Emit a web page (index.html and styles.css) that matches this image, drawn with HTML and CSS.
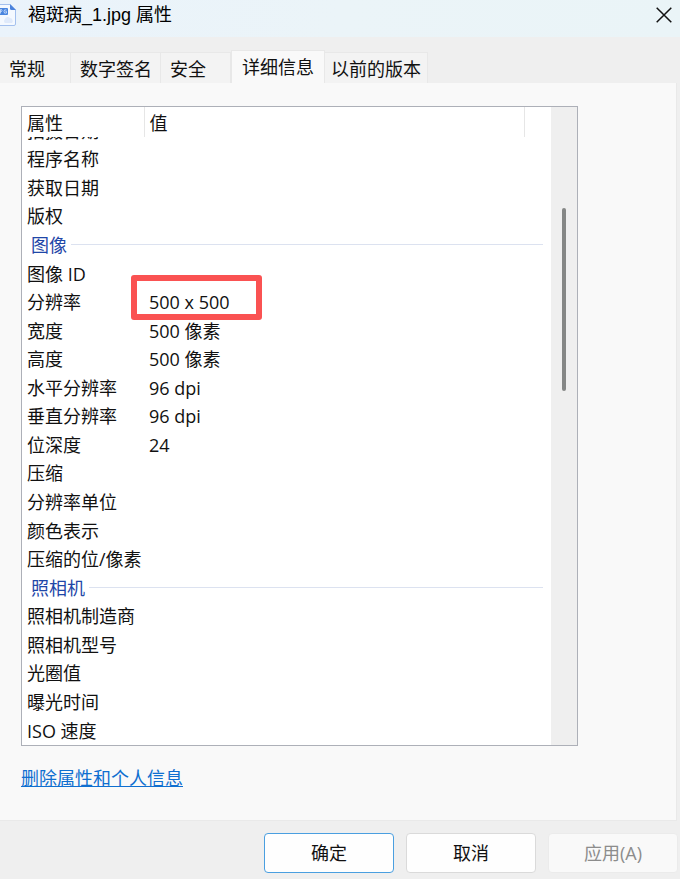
FILE: index.html
```html
<!DOCTYPE html>
<html lang="zh-CN">
<head>
<meta charset="utf-8">
<meta name="viewport" content="width=device-width, initial-scale=1">
<title>褐斑病_1.jpg 属性</title>
<link rel="stylesheet" href="styles.css">
</head>
<body>
<div class="dialog">
  <header class="titlebar">
    <svg class="file-icon" width="16" height="22" viewBox="0 0 16 22" aria-hidden="true">
      <path d="M-4 .5H10L15.500 6V20Q15.500 21.500 14 21.500H-4Z" fill="#f4f9ff" stroke="#a3c0ee"/>
      <path d="M10 0L16 6H11.500Q10 6 10 4.500Z" fill="#4a82dc"/>
      <path d="M5 19a2.500 2.500 0 0 1 0-4a3 3 0 0 1 5-1a3 3 0 0 1 2 5Z" fill="#dfeafb"/>
      <rect x="-2" y="4" width="10" height="7" rx="1" fill="#4a86df"/>
      <path d="M.5 9.500V5.500H1.500Q2.500 6.500 1.500 7.500H.5M6.500 6Q4 5 4 7.500T6.500 9V7.500H5.500" fill="none" stroke="#d6e5fb" stroke-width=".8"/>
    </svg>
    <h1 class="title">褐斑病_1.jpg 属性</h1>
    <button class="close" type="button" aria-label="关闭">
      <svg width="16" height="16" viewBox="0 0 16 16" aria-hidden="true"><path d="M.7 .7L15.300 15.300M15.300 .7L.7 15.300" stroke="#111" stroke-width="1.500" fill="none"/></svg>
    </button>
  </header>

  <nav class="tabs" role="tablist">
    <button class="tab" type="button" role="tab">常规</button>
    <button class="tab" type="button" role="tab">数字签名</button>
    <button class="tab" type="button" role="tab">安全</button>
    <button class="tab active" type="button" role="tab" aria-selected="true">详细信息</button>
    <button class="tab" type="button" role="tab">以前的版本</button>
  </nav>

  <main class="panel">
    <div class="list">
      <table class="details">
        <colgroup><col class="col-name"><col><col class="col-end"></colgroup>
        <thead>
          <tr><th scope="col">属性</th><th scope="col">值</th><th></th></tr>
        </thead>
        <tbody>
          <tr class="clipped"><td colspan="3"><div class="clip">拍摄日期</div></td></tr>
          <tr><td>程序名称</td><td></td><td></td></tr>
          <tr><td>获取日期</td><td></td><td></td></tr>
          <tr><td>版权</td><td></td><td></td></tr>
          <tr><td colspan="3"><div class="group">图像</div></td></tr>
          <tr><td>图像 ID</td><td></td><td></td></tr>
          <tr><td>分辨率</td><td><span class="marked">500 x 500</span></td><td></td></tr>
          <tr><td>宽度</td><td>500 像素</td><td></td></tr>
          <tr><td>高度</td><td>500 像素</td><td></td></tr>
          <tr><td>水平分辨率</td><td>96 dpi</td><td></td></tr>
          <tr><td>垂直分辨率</td><td>96 dpi</td><td></td></tr>
          <tr><td>位深度</td><td>24</td><td></td></tr>
          <tr><td>压缩</td><td></td><td></td></tr>
          <tr><td>分辨率单位</td><td></td><td></td></tr>
          <tr><td>颜色表示</td><td></td><td></td></tr>
          <tr><td colspan="2">压缩的位/像素</td><td></td></tr>
          <tr><td colspan="3"><div class="group">照相机</div></td></tr>
          <tr><td>照相机制造商</td><td></td><td></td></tr>
          <tr><td>照相机型号</td><td></td><td></td></tr>
          <tr><td>光圈值</td><td></td><td></td></tr>
          <tr><td>曝光时间</td><td></td><td></td></tr>
          <tr><td>ISO 速度</td><td></td><td></td></tr>
        </tbody>
      </table>
      <div class="scrollbar"><div class="thumb"></div></div>
    </div>
    <a class="remove" href="#">删除属性和个人信息</a>
  </main>

  <footer class="actions">
    <button class="btn primary" type="button">确定</button>
    <button class="btn" type="button">取消</button>
    <button class="btn" type="button" disabled>应用(A)</button>
  </footer>
</div>
</body>
</html>
```
FILE: styles.css
```css
* { box-sizing: border-box; }

body {
  margin: 0;
  background: #efefef;
  color: #111;
  font: 18px/28px "Open Sans", "Noto Sans CJK SC", sans-serif;
}

button { font: inherit; color: inherit; }

.dialog {
  display: flex;
  flex-direction: column;
  min-height: 100vh;
}

.titlebar {
  display: flex;
  align-items: center;
  height: 37px;
  padding: 0 8px 7px 0;
  background: linear-gradient(100deg, #eaf3fb, #ebf4f8 50%, #eaf4f7);
}

.title {
  flex: 1;
  margin: 0 0 0 12px;
  font: 18px/28px "Liberation Sans", "Noto Sans CJK SC", sans-serif;
  color: #000;
}

.close {
  display: flex;
  padding: 0;
  border: 0;
  background: none;
}

.tabs {
  display: flex;
  align-items: flex-end;
  padding-top: 13px;
}

.tab {
  height: 31px;
  padding: 0 8px 0 9px;
  border: 1px solid #e8e8e8;
  border-width: 1px 1px 0 0;
  background: #f3f3f3;
  line-height: 32px;
  text-align: left;
}

.tab:nth-child(1) { min-width: 71px; }
.tab:nth-child(3) { min-width: 70px; }

.tab:last-child { padding: 0 6px; }

.tab.active {
  height: 33px;
  padding: 0 10px;
  border-left-width: 1px;
  background: #f9f9f9;
  line-height: 30px;
}

.panel {
  flex: 1;
  margin-right: 3px;
  padding: 23px 98px 27px 21px;
  border: 1px solid #e9e9e9;
  border-width: 0 1px 1px 0;
  background: #f9f9f9;
}

.list {
  display: flex;
  height: 640px;
  margin-bottom: 18px;
  border: 1px solid #adb0b8;
  background: #fff;
}

.details {
  flex: 1;
  height: 638px;
  border-collapse: collapse;
  table-layout: fixed;
}

.col-name { width: 122px; }
.col-end { width: 27px; }

th, td {
  padding: 0 0 0 5px;
  text-align: left;
  font-weight: 400;
  white-space: nowrap;
}

th {
  height: 30px;
  padding-top: 2px;
  border-right: 1px solid #e6e6e6;
}

th:last-child { border-right: 0; }

.clipped td { height: 8px; }

.clip {
  display: flex;
  align-items: flex-end;
  height: 8px;
  overflow: hidden;
}

.group {
  display: flex;
  align-items: center;
  gap: 4px;
  padding: 0 8px 0 4px;
  color: #1f47a8;
}

.group::after {
  content: "";
  flex: 1;
  height: 1px;
  background: #dce2f0;
}

.marked { position: relative; }

/* Hand-drawn highlight around the resolution value */
.marked::after {
  content: "";
  position: absolute;
  inset: -15px -32px -6px -18px;
  border: 6px solid #fa5252;
  border-radius: 3px;
}

.scrollbar {
  width: 26px;
  padding: 101px 11px 0;
  background: #efefef;
}

.thumb {
  height: 183px;
  border-radius: 2px;
  background: #858786;
}

.remove {
  color: #0f6fd0;
  text-decoration: underline;
}

.actions {
  display: flex;
  justify-content: flex-end;
  gap: 12px;
  padding: 12px 2px 6px;
}

.btn {
  width: 130px;
  height: 40px;
  padding: 0;
  border: 1px solid #dadada;
  border-radius: 4px;
  background: #fefefe;
}

.btn.primary { border-color: #4a9fe0; }

.btn:disabled {
  border-color: #ebebeb;
  background: #f9f9f9;
  color: #8c8c8c;
}
```
